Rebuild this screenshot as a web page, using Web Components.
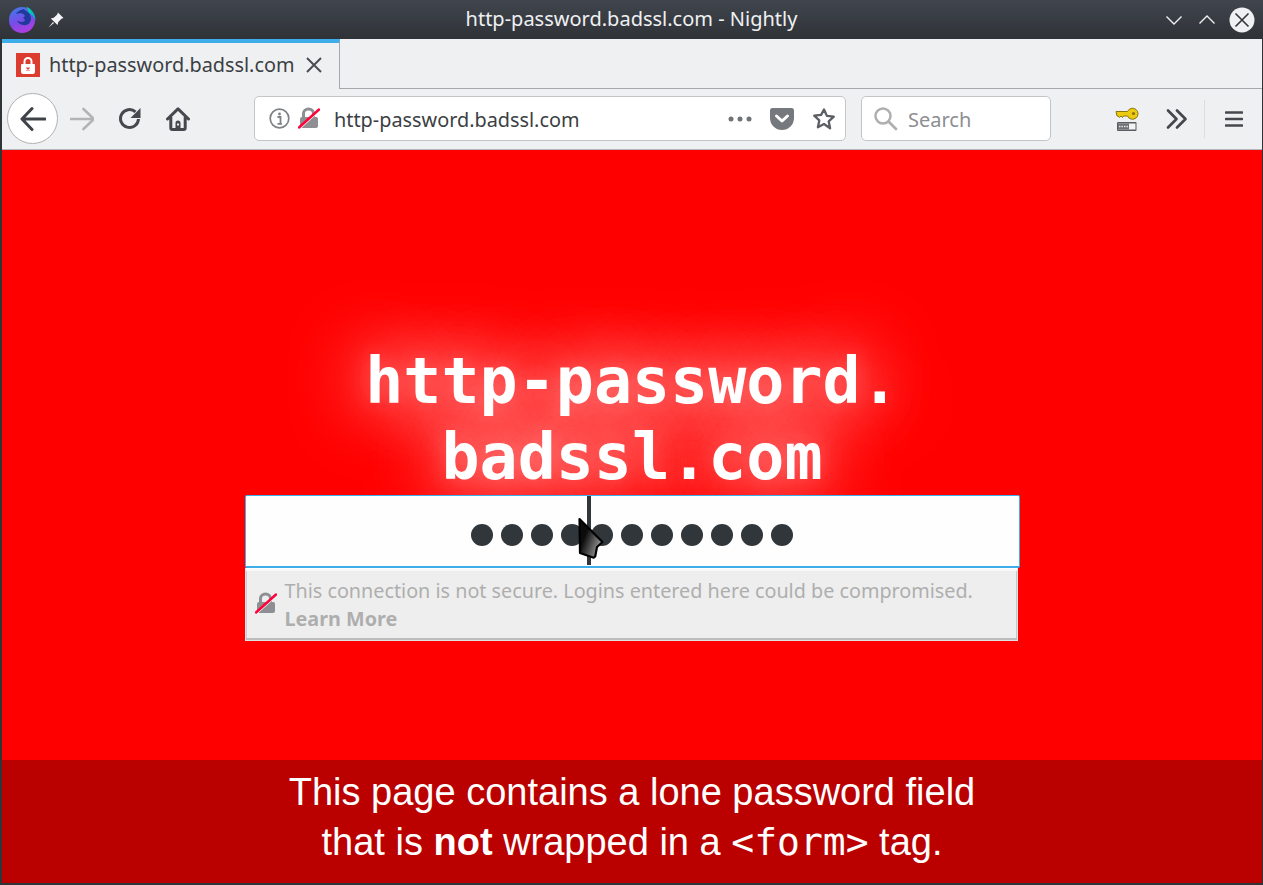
<!DOCTYPE html>
<html lang="en">
<head>
<meta charset="UTF-8">
<title>http-password.badssl.com - Nightly</title>
<style>
  html, body { margin: 0; height: 100%; overflow: hidden; background: #2f3437; }
  body { font-family: "Noto Sans", sans-serif; }
</style>
</head>
<body>
<app-window>
  <title-bar title="http-password.badssl.com - Nightly"></title-bar>
  <tab-strip label="http-password.badssl.com"></tab-strip>
  <nav-bar url="http-password.badssl.com"></nav-bar>
  <bad-page>
    <span slot="heading">http-password.<br>badssl.com</span>
    This page contains a lone password field<br>that is <b>not</b> wrapped in a <code>&lt;form&gt;</code> tag.
  </bad-page>
</app-window>

<script>
  // Struck-through padlock, used in the url bar and in the login warning
  const BROKEN_LOCK = `
    <path d="M4 10V6.500a6.500 6 0 0 1 13 0V10h.500A2 2 0 0 1 20 12v7a2 2 0 0 1-2 2H4a2 2 0 0 1-2-2v-7a2 2 0 0 1 2-2zm3 0h7V6.500a3.500 3 0 0 0-7 0z" fill="#8d8f92"/>
    <path d="M1 20.500 21 2.500" stroke="#f5f7fa" stroke-width="1.200" transform="translate(.9 1)"/>
    <path d="M1 20.500 21 2.500" stroke="#ff0039" stroke-width="2.400" stroke-linecap="round"/>`;

  /** Outer window frame, dark border around everything. */
  class AppWindow extends HTMLElement {
    constructor() {
      super();
      this.attachShadow({ mode: 'open' });
      this.shadowRoot.innerHTML = `
        <style>
          :host { display: flex; flex-direction: column; width: 1263px; height: 885px; box-sizing: border-box;
                  padding: 0 1px 2px 2px; background: #2f3437; }
        </style>
        <slot></slot>`;
    }
  }

  /** KDE style title bar. */
  class TitleBar extends HTMLElement {
    constructor() {
      super();
      this.attachShadow({ mode: 'open' });
      this.shadowRoot.innerHTML = `
        <style>
          :host { display: flex; align-items: center; height: 39px; margin: 0 -1px 0 -2px; padding: 0 9px;
                  background: linear-gradient(#40454e, #2f3337); color: #eff0f1; font-size: 20px; flex: none; position: relative; }
          .title { position: absolute; left: 0; right: 0; text-align: center; top: 6px; line-height: 26px; }
          .left, .right { display: flex; align-items: center; z-index: 1; }
          .left { gap: 11px; }
          .right { margin-left: auto; gap: 13px; margin-right: -1px; }
          .up { margin-right: -1px; }
          svg { display: block; }
        </style>
        <div class="left">
          <svg width="27" height="27" viewBox="0 0 27 27">
            <defs>
              <linearGradient id="g" x1="0.2" y1="0" x2="0.6" y2="1"><stop offset="0" stop-color="#3f7be8"/><stop offset=".55" stop-color="#7a4be8"/><stop offset="1" stop-color="#b03ee0"/></linearGradient>
              <linearGradient id="t" x1="0" y1="0" x2="1" y2="1"><stop offset="0" stop-color="#00e0a0"/><stop offset="1" stop-color="#08a0d8"/></linearGradient>
            </defs>
            <circle cx="13" cy="14" r="13" fill="url(#g)"/>
            <path d="M17 .500c5 2 9.500 7 9.500 14-1.500-3.500-4-6.500-7.500-8 .500-2 -.500-4.500-2-6z" fill="url(#t)"/>
            <path d="M15 3c-3 1-6 1.500-8 5 3-1 6-1 8 .500 1.500 1 .500 3-1.500 3.500 2 .500 3 1.500 2 3-2 1.500-5 1-7.500-.500 1.500 4 8 6.500 12 3 3-3 2.500-8-.500-11-2-1.500-4-2-4.500-3.500z" fill="#1e3a9c"/>
          </svg>
          <svg width="18" height="18" viewBox="0 0 18 18">
            <path d="M11 1.500 16.500 7l-2 .8-3.200 3.200-.8 3L3.800 7.500l3-.8 3.400-3.200z" fill="#f3f4f5"/>
            <path d="M6 11 1.500 16.500 7 12z" fill="#f3f4f5"/>
          </svg>
        </div>
        <div class="title">${this.getAttribute('title')}</div>
        <div class="right">
          <svg width="20" height="20" viewBox="0 0 20 20"><path d="M2.500 6.500 10 14l7.500-7.500" fill="none" stroke="#eff0f1" stroke-width="1.400"/></svg>
          <svg class="up" width="20" height="20" viewBox="0 0 20 20"><path d="M2.500 13.500 10 6l7.500 7.500" fill="none" stroke="#eff0f1" stroke-width="1.400"/></svg>
          <svg width="26" height="26" viewBox="0 0 26 26"><circle cx="13" cy="13" r="12.500" fill="#eff0f1"/><path d="M6.500 6.500l13 13m0-13-13 13" stroke="#31363b" stroke-width="1.600"/></svg>
        </div>`;
    }
  }

  /** Tab strip with the single selected tab. */
  class TabStrip extends HTMLElement {
    constructor() {
      super();
      this.attachShadow({ mode: 'open' });
      this.shadowRoot.innerHTML = `
        <style>
          :host { display: flex; height: 50px; flex: none; background: #eff0f2; color: #3b3f44; font-size: 19.850px; box-sizing: border-box; }
          .tab { display: flex; align-items: center; width: 338px; box-sizing: border-box; padding: 0 0 2px 14px;
                 border-top: 4px solid #3daee9; border-right: 1px solid #a5a7aa; background: #eff0f2; }
          .rest { flex: 1; border-bottom: 1px solid #a5a7aa; }
          .fav { margin-right: 9px; display: block; }
          .label { white-space: nowrap; line-height: 26px; }
          .x { display: block; margin-left: 10px; }
        </style>
        <div class="tab">
          <svg class="fav" width="24" height="24" viewBox="0 0 24 24">
            <rect width="24" height="24" fill="#dc3b2f"/>
            <path d="M7.500 11V8.500a4.500 4.500 0 0 1 9 0V11H18a1 1 0 0 1 1 1v7a2 2 0 0 1-2 2H7a2 2 0 0 1-2-2v-7a1 1 0 0 1 1-1zm2 0h5V8.500a2.500 2.500 0 0 0-5 0z" fill="#fff"/>
            <path d="M10.500 14.500l3 3m0-3-3 3" stroke="#dc3b2f" stroke-width="1.300"/>
          </svg>
          <span class="label">${this.getAttribute('label')}</span>
          <svg class="x" width="18" height="18" viewBox="0 0 18 18"><path d="M2 2l14 14m0-14L2 16" stroke="#4a4e52" stroke-width="2"/></svg>
        </div>
        <div class="rest"></div>`;
    }
  }

  /** Toolbar: back, forward, reload, home, url bar, search, extensions. */
  class NavBar extends HTMLElement {
    constructor() {
      super();
      this.attachShadow({ mode: 'open' });
      this.shadowRoot.innerHTML = `
        <style>
          :host { display: flex; align-items: center; height: 61px; flex: none; box-sizing: border-box; background: #eff0f2;
                  border-bottom: 1px solid #b4b6b9; padding: 0 0 1px 5px; }
          svg { display: block; flex: none; }
          .back { width: 51px; height: 51px; box-sizing: border-box; border-radius: 50%; border: 1px solid #b1b1b3; background: #fff;
                  display: flex; align-items: center; justify-content: center; flex: none; }
          .fwd { margin-left: 12px; }
          .reload { margin-left: 24px; }
          .home { margin-left: 24px; }
          .sep { width: 1px; height: 38px; background: #dcdde0; margin-left: 16px; }
          .menu { margin-left: 20px; }
          .key { margin-left: 64px; }
          .more { margin-left: 27px; }
          url-bar { margin-left: 64px; }
          search-box { margin-left: 15px; }
        </style>
        <div class="back"><svg width="26" height="26" viewBox="0 0 26 26"><path d="M12 2.500 2 13l10 10.500M2.500 13H25" fill="none" stroke="#3f4347" stroke-width="3" stroke-linecap="round" stroke-linejoin="round"/></svg></div>
        <svg class="fwd" width="24" height="24" viewBox="0 0 24 24"><path d="M13.500 2 24 12 13.500 22M23 12H1" fill="none" stroke="#b3b4b6" stroke-width="2.600" stroke-linecap="round" stroke-linejoin="round"/></svg>
        <svg class="reload" width="24" height="24" viewBox="0 0 24 24"><path d="M20.500 12a9 9 0 1 1-3-7.200" fill="none" stroke="#45494d" stroke-width="3"/><path d="M22.500 1v10h-10z" fill="#45494d"/></svg>
        <svg class="home" width="24" height="24" viewBox="0 0 24 24"><path d="M1.500 12 12 1.800 22.500 12M4.800 10v11a1.500 1.500 0 0 0 1.500 1.500h11.400a1.500 1.500 0 0 0 1.500-1.500V10" fill="none" stroke="#45494d" stroke-width="3" stroke-linejoin="round" stroke-linecap="round"/><path d="M9.500 22v-6a2.500 2.500 0 0 1 5 0v6zM11 18.500h2v-2h-2z" fill="#45494d" fill-rule="evenodd"/></svg>
        <url-bar url="${this.getAttribute('url')}"></url-bar>
        <search-box></search-box>
        <svg class="key" width="24" height="24" viewBox="0 0 24 24">
          <path d="M1 4.500h11.500a5.500 5.500 0 1 1 0 4.500H8.500L7.500 10.500 6 9 4.500 10.500 3 9H2z" fill="#edcb10" stroke="#8a7410" stroke-width="1"/>
          <circle cx="18.500" cy="6.500" r="1.600" fill="#8a7410"/>
          <rect x="2" y="15" width="19.500" height="9" rx="1" fill="#5a5d61"/>
          <rect x="3" y="16.500" width="17.500" height="6" fill="#f3f3f3"/>
          <rect x="3" y="16.500" width="11" height="6" fill="#6e7175"/>
          <path d="M4 19.500h9" stroke="#e6e6e6" stroke-width="1.500" stroke-dasharray="1.500 1"/>
        </svg>
        <svg class="more" width="22" height="22" viewBox="0 0 22 22"><path d="M2 2.500 10.500 11 2 19.500M11 2.500 19.500 11 11 19.500" fill="none" stroke="#45494d" stroke-width="2.700" stroke-linecap="round" stroke-linejoin="round"/></svg>
        <div class="sep"></div>
        <svg class="menu" width="18" height="18" viewBox="0 0 18 18"><path d="M1 2.500h16M1 9h16M1 15.500h16" stroke="#45494d" stroke-width="2.600" stroke-linecap="round"/></svg>`;
    }
  }

  /** Location field. */
  class UrlBar extends HTMLElement {
    constructor() {
      super();
      this.attachShadow({ mode: 'open' });
      this.shadowRoot.innerHTML = `
        <style>
          :host { display: flex; align-items: center; width: 592px; height: 45px; box-sizing: border-box; flex: none; background: #fff;
                  border: 1px solid #c4c5c8; border-radius: 5px; color: #3b3f44; font-size: 19.850px; padding: 0 9px 0 14px; }
          svg { display: block; flex: none; }
          .lock { margin-left: 8px; }
          .url { margin-left: 14px; padding-top: 3px; white-space: nowrap; line-height: 26px; }
          .dots { margin-left: auto; }
          .pocket { margin-left: 18px; }
          .star { margin-left: 18px; }
        </style>
        <svg width="21" height="21" viewBox="0 0 21 21"><circle cx="10.500" cy="10.500" r="9.300" fill="none" stroke="#7f8285" stroke-width="1.700"/><circle cx="10.500" cy="6" r="1.400" fill="#7f8285"/><path d="M8.500 9h3v6.500M8.500 15.800h4.500" fill="none" stroke="#7f8285" stroke-width="1.800"/></svg>
        <svg class="lock" width="22" height="23" viewBox="0 0 22 23">${BROKEN_LOCK}</svg>
        <span class="url">${this.getAttribute('url')}</span>
        <svg class="dots" width="24" height="6" viewBox="0 0 24 6"><circle cx="3" cy="3" r="2.500" fill="#6f7276"/><circle cx="12" cy="3" r="2.500" fill="#6f7276"/><circle cx="21" cy="3" r="2.500" fill="#6f7276"/></svg>
        <svg class="pocket" width="24" height="22" viewBox="0 0 24 22"><path d="M2.500 0h19A2.500 2.500 0 0 1 24 2.500V10a12 12 0 0 1-24 0V2.500A2.500 2.500 0 0 1 2.500 0z" fill="#75787c"/><path d="M6.500 8 12 13l5.500-5" fill="none" stroke="#fff" stroke-width="3" stroke-linecap="round" stroke-linejoin="round"/></svg>
        <svg class="star" width="24" height="24" viewBox="0 0 24 24"><path d="M12 2.500l2.900 6.400 6.900.8-5.100 4.700 1.400 6.900L12 17l-6.100 3.300 1.400-6.900-5.100-4.700 6.900-.8z" fill="none" stroke="#5b5f63" stroke-width="2.300" stroke-linejoin="round"/></svg>`;
    }
  }

  /** Search field. */
  class SearchBox extends HTMLElement {
    constructor() {
      super();
      this.attachShadow({ mode: 'open' });
      this.shadowRoot.innerHTML = `
        <style>
          :host { display: flex; align-items: center; width: 190px; height: 45px; box-sizing: border-box; flex: none; background: #fff;
                  border: 1px solid #c4c5c8; border-radius: 5px; color: #8c8e91; font-size: 20px; padding: 0 0 0 11px; }
          svg { display: block; flex: none; margin-right: 10px; }
          span { padding-top: 1px; }
        </style>
        <svg width="25" height="25" viewBox="0 0 25 25"><circle cx="10" cy="10" r="7.500" fill="none" stroke="#aeafb1" stroke-width="2.500"/><path d="M15.500 15.500 23 23" stroke="#aeafb1" stroke-width="2.800" stroke-linecap="round"/></svg>
        <span>Search</span>`;
    }
  }

  /** Password input with the fake bullets, caret and mouse pointer. */
  class PasswordField extends HTMLElement {
    constructor() {
      super();
      this.attachShadow({ mode: 'open' });
      const count = Number(this.getAttribute('length'));
      this.shadowRoot.innerHTML = `
        <style>
          :host { display: flex; align-items: center; justify-content: center; gap: 8px; width: 775px; height: 73px; box-sizing: border-box;
                  background: #fefefe; border: 1px solid #3daee9; border-bottom-width: 2px; border-radius: 2px; position: relative; padding-top: 7px; }
          i { display: block; width: 22px; height: 22px; border-radius: 50%; background: #31363b; }
          .caret { position: absolute; left: 341px; top: 0; width: 4px; height: 69px; background: #31363b; }
          .pointer { position: absolute; left: 331px; top: 21px; }
        </style>
        ${'<i></i>'.repeat(count)}
        <div class="caret"></div>
        <svg class="pointer" width="28" height="44" viewBox="0 0 28 44">
          <defs><linearGradient id="c" x1="0.1" y1="0.2" x2="0.9" y2="0.7"><stop offset=".25" stop-color="#0c0c0c"/><stop offset=".95" stop-color="#8c8c8c"/></linearGradient></defs>
          <path d="M2.500 2 25.500 25l-5.500 5-1.800 9.500-1.500 1.200L3 36z" fill="url(#c)" stroke="#000" stroke-width="2.200" stroke-linejoin="round"/>
        </svg>`;
    }
  }

  /** Insecure login warning that hangs under the focused field. */
  class LoginWarning extends HTMLElement {
    constructor() {
      super();
      this.attachShadow({ mode: 'open' });
      this.shadowRoot.innerHTML = `
        <style>
          :host { display: flex; align-items: center; position: absolute; left: 0; top: 73px; width: 773px; height: 73px; box-sizing: border-box;
                  background: #eeeeee; border: 1px solid #dfe3e6; border-top-color: #fff;
                  box-shadow: inset 0 2px 0 #f8f8f8, inset 0 -2px 0 #bcbcbc, inset -1px 0 0 #c8c8c8, inset 1px 0 0 #d0d0d0;
                  color: #aeaeae; font-size: 19.770px; line-height: 28px; padding: 1px 0 0 9px; }
          svg { display: block; flex: none; margin: 0 8px 3px 0; }
          b { font-weight: 700; display: block; }
        </style>
        <svg width="22" height="23" viewBox="0 0 22 23">${BROKEN_LOCK}</svg>
        <div>This connection is not secure. Logins entered here could be compromised.<b>Learn More</b></div>`;
    }
  }

  /** The badssl page itself: big red panel and darker footer. */
  class BadPage extends HTMLElement {
    constructor() {
      super();
      this.attachShadow({ mode: 'open' });
      this.shadowRoot.innerHTML = `
        <style>
          :host { display: flex; flex-direction: column; flex: 1; min-height: 0; background: #ff0000; color: #fff; }
          main { flex: 1; display: flex; flex-direction: column; align-items: center; justify-content: center; padding-top: 1px; }
          h1 { margin: 0; font: 700 63.300px/76px "DejaVu Sans Mono", monospace; text-align: center;
               text-shadow: 0 0 76px #fff, 0 0 76px rgba(255,255,255,.5), 0 0 22px rgba(255,255,255,.22); }
          .form { position: relative; }
          footer { height: 123px; flex: none; box-sizing: border-box; background: #bb0000; padding-top: 7px; text-align: center;
                   font: 38px/50px "Liberation Sans", Arial, sans-serif; }
          ::slotted(code) { font-family: "DejaVu Sans Mono", monospace; }
        </style>
        <main>
          <h1><slot name="heading"></slot></h1>
          <div class="form">
            <password-field length="11"></password-field>
            <login-warning></login-warning>
          </div>
        </main>
        <footer><slot></slot></footer>`;
    }
  }

  customElements.define('app-window', AppWindow);
  customElements.define('title-bar', TitleBar);
  customElements.define('tab-strip', TabStrip);
  customElements.define('nav-bar', NavBar);
  customElements.define('url-bar', UrlBar);
  customElements.define('search-box', SearchBox);
  customElements.define('password-field', PasswordField);
  customElements.define('login-warning', LoginWarning);
  customElements.define('bad-page', BadPage);
</script>
</body>
</html>
